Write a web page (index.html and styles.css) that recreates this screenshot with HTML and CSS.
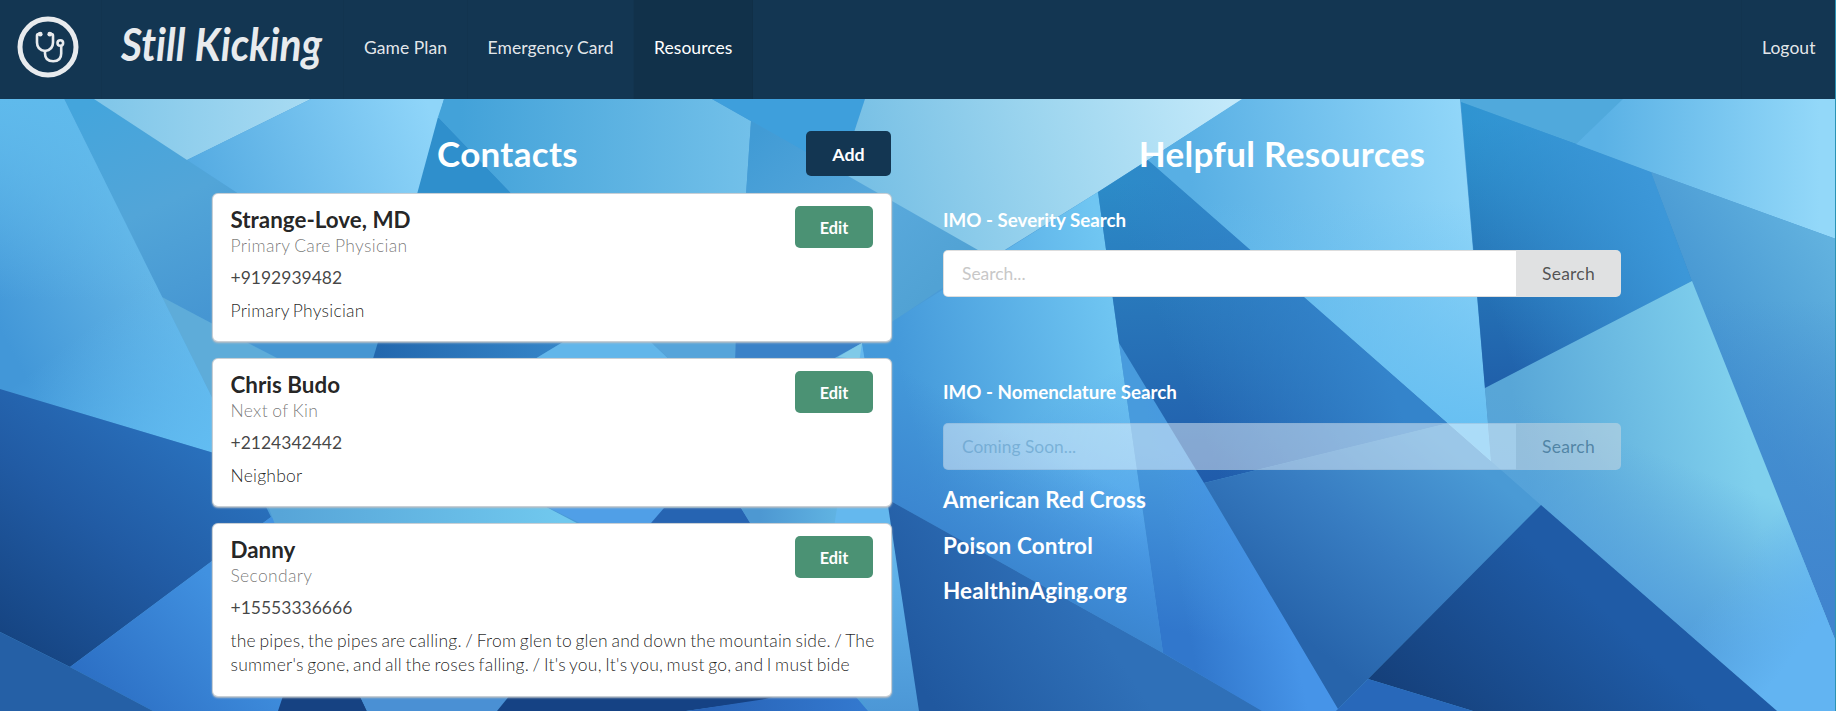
FILE: index.html
```html
<!DOCTYPE html>
<html lang="en">
<head>
<meta charset="utf-8">
<title>Still Kicking - Resources</title>
<link rel="stylesheet" href="styles.css">
</head>
<body>
<svg class="backdrop" width="1836" height="711" viewBox="0 0 1836 711" aria-hidden="true">
  <defs>
    <linearGradient id="ga" gradientUnits="userSpaceOnUse" x1="0" y1="330" x2="170" y2="240"><stop offset="0" stop-color="#4297d8"/><stop offset="1" stop-color="#6abbe9"/></linearGradient>
    <linearGradient id="ga2" gradientUnits="userSpaceOnUse" x1="0" y1="99" x2="0" y2="300"><stop offset="0" stop-color="#5fbaec"/><stop offset="1" stop-color="#5fbaec" stop-opacity="0"/></linearGradient>
    <linearGradient id="ga3" gradientUnits="userSpaceOnUse" x1="110" y1="310" x2="220" y2="450"><stop offset="0" stop-color="#5fbbf2" stop-opacity="0"/><stop offset="1" stop-color="#62bdf2"/></linearGradient>
    <linearGradient id="gb" gradientUnits="userSpaceOnUse" x1="100" y1="99" x2="200" y2="320"><stop offset="0" stop-color="#44a5dc"/><stop offset=".5" stop-color="#52a5d8"/><stop offset="1" stop-color="#4696d2"/></linearGradient>
    <linearGradient id="gc" gradientUnits="userSpaceOnUse" x1="110" y1="0" x2="300" y2="0"><stop offset="0" stop-color="#82c7e9"/><stop offset="1" stop-color="#a6daf2"/></linearGradient>
    <linearGradient id="gd" gradientUnits="userSpaceOnUse" x1="200" y1="190" x2="430" y2="110"><stop offset="0" stop-color="#55abe2"/><stop offset="1" stop-color="#8fd5f9"/></linearGradient>
    <linearGradient id="gf" gradientUnits="userSpaceOnUse" x1="210" y1="440" x2="40" y2="660"><stop offset="0" stop-color="#2a72be"/><stop offset=".5" stop-color="#215ba4"/><stop offset="1" stop-color="#164583"/></linearGradient>
    <linearGradient id="gg" gradientUnits="userSpaceOnUse" x1="90" y1="690" x2="212" y2="580"><stop offset="0" stop-color="#2c6fc4"/><stop offset="1" stop-color="#4191e0"/></linearGradient>
    <linearGradient id="gm1" gradientUnits="userSpaceOnUse" x1="378" y1="0" x2="560" y2="0"><stop offset="0" stop-color="#2368ae"/><stop offset="1" stop-color="#3585c8"/></linearGradient>
    <linearGradient id="gtop" gradientUnits="userSpaceOnUse" x1="460" y1="0" x2="750" y2="0"><stop offset="0" stop-color="#43a2d9"/><stop offset="1" stop-color="#72c0e9"/></linearGradient>
    <linearGradient id="gmid" gradientUnits="userSpaceOnUse" x1="280" y1="0" x2="560" y2="0"><stop offset="0" stop-color="#57a5d8"/><stop offset="1" stop-color="#70c8ee"/></linearGradient>
    <linearGradient id="gpale" gradientUnits="userSpaceOnUse" x1="870" y1="190" x2="1230" y2="99"><stop offset="0" stop-color="#78c0e5"/><stop offset=".5" stop-color="#9ed6ef"/><stop offset="1" stop-color="#c3e9fa"/></linearGradient>
    <linearGradient id="gw" gradientUnits="userSpaceOnUse" x1="760" y1="130" x2="920" y2="300"><stop offset="0" stop-color="#419bd5"/><stop offset=".6" stop-color="#59a9dc"/><stop offset="1" stop-color="#51a2d4"/></linearGradient>
    <linearGradient id="gi" gradientUnits="userSpaceOnUse" x1="760" y1="0" x2="885" y2="0"><stop offset="0" stop-color="#4d98d2"/><stop offset="1" stop-color="#6cc4ec"/></linearGradient>
    <linearGradient id="gi2" gradientUnits="userSpaceOnUse" x1="0" y1="540" x2="0" y2="711"><stop offset="0" stop-color="#64b8ee"/><stop offset="1" stop-color="#4c97d6"/></linearGradient>
    <linearGradient id="gl" gradientUnits="userSpaceOnUse" x1="900" y1="370" x2="1120" y2="320"><stop offset="0" stop-color="#4499da"/><stop offset="1" stop-color="#70c6f2"/></linearGradient>
    <linearGradient id="gl2" gradientUnits="userSpaceOnUse" x1="1000" y1="430" x2="1110" y2="640"><stop offset="0" stop-color="#4794e4" stop-opacity="0"/><stop offset="1" stop-color="#4899ee"/></linearGradient>
    <linearGradient id="gl3" gradientUnits="userSpaceOnUse" x1="960" y1="400" x2="900" y2="510"><stop offset="0" stop-color="#3b86d0" stop-opacity="0"/><stop offset="1" stop-color="#3b86d0"/></linearGradient>
    <linearGradient id="gj" gradientUnits="userSpaceOnUse" x1="930" y1="700" x2="1080" y2="600"><stop offset="0" stop-color="#20589f"/><stop offset="1" stop-color="#2f70b8"/></linearGradient>
    <linearGradient id="gk" gradientUnits="userSpaceOnUse" x1="1190" y1="180" x2="1200" y2="480"><stop offset="0" stop-color="#2c8bc8"/><stop offset=".45" stop-color="#2875b9"/><stop offset="1" stop-color="#205cab"/></linearGradient>
    <linearGradient id="gk2" gradientUnits="userSpaceOnUse" x1="1190" y1="400" x2="1370" y2="330"><stop offset="0" stop-color="#3484cb" stop-opacity="0"/><stop offset="1" stop-color="#3484cb"/></linearGradient>
    <linearGradient id="gll" gradientUnits="userSpaceOnUse" x1="1480" y1="470" x2="1330" y2="660"><stop offset="0" stop-color="#4a9ad5"/><stop offset=".5" stop-color="#387dc2"/><stop offset="1" stop-color="#2764ab"/></linearGradient>
    <linearGradient id="gmm" gradientUnits="userSpaceOnUse" x1="1210" y1="460" x2="1170" y2="630"><stop offset="0" stop-color="#489bdd"/><stop offset="1" stop-color="#3177cc"/></linearGradient>
    <linearGradient id="gmm2" gradientUnits="userSpaceOnUse" x1="1190" y1="640" x2="1290" y2="620"><stop offset="0" stop-color="#4694e8" stop-opacity="0"/><stop offset="1" stop-color="#4694e8"/></linearGradient>
    <linearGradient id="gn" gradientUnits="userSpaceOnUse" x1="1190" y1="180" x2="1470" y2="130"><stop offset="0" stop-color="#58afe4"/><stop offset="1" stop-color="#92d7f9"/></linearGradient>
    <linearGradient id="gn2" gradientUnits="userSpaceOnUse" x1="0" y1="200" x2="0" y2="440"><stop offset="0" stop-color="#66bff2" stop-opacity="0"/><stop offset="1" stop-color="#66bff2"/></linearGradient>
    <linearGradient id="go" gradientUnits="userSpaceOnUse" x1="1500" y1="120" x2="1490" y2="380"><stop offset="0" stop-color="#2b93cf"/><stop offset=".5" stop-color="#2779ba"/><stop offset="1" stop-color="#2061ab"/></linearGradient>
    <linearGradient id="go2" gradientUnits="userSpaceOnUse" x1="1480" y1="280" x2="1660" y2="210"><stop offset="0" stop-color="#3c97d8" stop-opacity="0"/><stop offset="1" stop-color="#3c97d8"/></linearGradient>
    <linearGradient id="gq" gradientUnits="userSpaceOnUse" x1="1600" y1="0" x2="1820" y2="0"><stop offset="0" stop-color="#5ab1e5"/><stop offset="1" stop-color="#93d8f9"/></linearGradient>
    <linearGradient id="gr" gradientUnits="userSpaceOnUse" x1="1700" y1="340" x2="1836" y2="250"><stop offset="0" stop-color="#4595d1"/><stop offset="1" stop-color="#62b2df"/></linearGradient>
    <linearGradient id="gr2" gradientUnits="userSpaceOnUse" x1="0" y1="300" x2="0" y2="620"><stop offset="0" stop-color="#4084ce" stop-opacity="0"/><stop offset="1" stop-color="#4084ce"/></linearGradient>
    <linearGradient id="gs" gradientUnits="userSpaceOnUse" x1="1520" y1="440" x2="1740" y2="400"><stop offset="0" stop-color="#58a6d7"/><stop offset="1" stop-color="#80d0ed"/></linearGradient>
    <linearGradient id="gs2" gradientUnits="userSpaceOnUse" x1="1750" y1="490" x2="1690" y2="640"><stop offset="0" stop-color="#539fdc" stop-opacity="0"/><stop offset="1" stop-color="#539fdc"/></linearGradient>
    <linearGradient id="gs3" gradientUnits="userSpaceOnUse" x1="1740" y1="560" x2="1820" y2="620"><stop offset="0" stop-color="#62b4f2" stop-opacity="0"/><stop offset="1" stop-color="#62b4f2"/></linearGradient>
    <linearGradient id="gt" gradientUnits="userSpaceOnUse" x1="1400" y1="700" x2="1540" y2="550"><stop offset="0" stop-color="#15407b"/><stop offset="1" stop-color="#1f5ba6"/></linearGradient>
    <linearGradient id="gbt" gradientUnits="userSpaceOnUse" x1="690" y1="0" x2="860" y2="0"><stop offset="0" stop-color="#2761b4"/><stop offset="1" stop-color="#3378ce"/></linearGradient>
  </defs>
  <rect width="1836" height="711" fill="#4a9bd6"/>
  <polygon points="64,99 95,99 260,208 380,342 374,370 300,370 162,297" fill="url(#gb)"/>
  <polygon points="162,297 212,323.5 246,342 275,357 330,390 244,462" fill="#5eacd9"/>
  <polygon points="94,99 311,99 187,160" fill="url(#gc)"/>
  <polygon points="187,160 311,99 444,99 396,275 300,275 260,208" fill="url(#gd)"/>
  <polygon points="0,99 64,99 244,462 0,389" fill="url(#ga)"/>
  <polygon points="0,99 64,99 244,462 0,389" fill="url(#ga2)"/>
  <polygon points="0,99 64,99 244,462 0,389" fill="url(#ga3)"/>
  <polygon points="0,389 244,462 271,517 212,561 70,667 0,632" fill="url(#gf)"/>
  <polygon points="70,667 271,517 400,600 278,711 153,711" fill="url(#gg)"/>
  <polygon points="0,632 70,667 153,711 0,711" fill="#2560a6"/>
  <polygon points="438,117 510,192 510,220 410,220" fill="#2f8fcc"/>
  <polygon points="444,99 712,99 751,121 736,342 734,400 650,342 510,192 438,117" fill="url(#gtop)"/>
  <polygon points="378,342 563,342 530,362 372,362" fill="url(#gm1)"/>
  <polygon points="563,342 651,342 672,362 530,362" fill="#62b6ea"/>
  <polygon points="651,342 736,342 735,362 672,362" fill="#56a4da"/>
  <polygon points="736,330 862,330 866,362 735,362" fill="#3b82c8"/>
  <polygon points="266,500 533,500 590,530 277,530" fill="url(#gmid)"/>
  <polygon points="533,500 672,500 646,530 594,530" fill="#509fe7"/>
  <polygon points="664,508 741,508 755,530 645,530" fill="#2664b2"/>
  <polygon points="712,99 865,99 841,172" fill="#3e9fdc"/>
  <polygon points="751,121 990,256 892,322 820,342 736,342" fill="url(#gw)"/>
  <polygon points="865,99 1243,99 1098,192 992,258 841,172" fill="url(#gpale)"/>
  <polygon points="862,343 750,405 741,508 750,523 890,530" fill="url(#gi)"/>
  <polygon points="838,357 862,343 865,360" fill="#80cae8"/>
  <polygon points="862,343 892,510 919,711 868,711 820,620" fill="url(#gi2)"/>
  <polygon points="1098,192 1119,343 1163,653 887,499 862,343 893,321" fill="url(#gl)"/>
  <polygon points="1098,192 1119,343 1163,653 887,499 862,343 893,321" fill="url(#gl2)"/>
  <polygon points="1098,192 1119,343 1163,653 887,499 862,343 893,321" fill="url(#gl3)"/>
  <polygon points="887,499 1163,653 1263,711 919,711" fill="url(#gj)"/>
  <polygon points="1119,343 1204,483 1339,709 1336,711 1262,711 1163,653" fill="url(#gmm)"/>
  <polygon points="1119,343 1204,483 1339,709 1336,711 1262,711 1163,653" fill="url(#gmm2)"/>
  <polygon points="1098,192 1148,160 1448,423 1204,483 1119,343" fill="url(#gk)"/>
  <polygon points="1098,192 1148,160 1448,423 1204,483 1119,343" fill="url(#gk2)"/>
  <polygon points="1448,423 1491,461 1541,505 1368,679 1338,709 1204,483" fill="url(#gll)"/>
  <polygon points="1242,99 1460,99 1491,461 1148,160" fill="url(#gn)"/>
  <polygon points="1242,99 1460,99 1491,461 1148,160" fill="url(#gn2)"/>
  <polygon points="1460,99 1624,99 1576,144 1461,103" fill="#50a9dc"/>
  <polygon points="1461,102 1576,144 1651,172 1692,281 1485,389" fill="url(#go)"/>
  <polygon points="1461,102 1576,144 1651,172 1692,281 1485,389" fill="url(#go2)"/>
  <polygon points="1623,99 1836,99 1836,239 1651,172 1576,144" fill="url(#gq)"/>
  <polygon points="1651,172 1836,239 1836,642 1692,281" fill="url(#gr)"/>
  <polygon points="1651,172 1836,239 1836,642 1692,281" fill="url(#gr2)"/>
  <polygon points="1485,388 1692,281 1836,642 1836,711 1777,711 1541,505 1491,461" fill="url(#gs)"/>
  <polygon points="1485,388 1692,281 1836,642 1836,711 1777,711 1541,505 1491,461" fill="url(#gs2)"/>
  <polygon points="1485,388 1692,281 1836,642 1836,711 1777,711 1541,505 1491,461" fill="url(#gs3)"/>
  <polygon points="1541,505 1777,711 1473,711 1368,679" fill="url(#gt)"/>
  <polygon points="1368,679 1473,711 1336,711" fill="#2868ba"/>
  <polygon points="285,690 357,690 367,711 278,711" fill="#164282"/>
  <polygon points="357,690 514,690 497,711 367,711" fill="#4a90d4"/>
  <polygon points="514,690 840,690 686,711 497,711" fill="#154284"/>
  <polygon points="686,711 765,699 800,690 850,690 868,711" fill="url(#gbt)"/>
  <rect x="1835" width="1" height="711" fill="#2b93b5"/>
</svg>

<nav class="menu">
  <a class="item badge-item" href="#">
    <svg width="62" height="62" viewBox="0 0 62 62" fill="none" stroke="#e8ebee" aria-hidden="true">
      <circle cx="31" cy="31" r="28" stroke-width="5"/>
      <g stroke-width="2.600" stroke-linecap="round" stroke-linejoin="round">
        <path d="M23 18h-1.500q-1.500 0-1.500 1.800v6.700q0 7.500 8 8.500 8-1 8-8.500v-6.700q0-1.800-1.500-1.800h-1.500"/>
        <path d="M28 35v2.500q0 7.800 8.200 7.800 8 0 8-7.800v-7.500"/>
        <circle cx="43.300" cy="27" r="2.800"/>
      </g>
      <g fill="#e8ebee" stroke="none"><circle cx="23.200" cy="18.200" r="2.400"/><circle cx="32.800" cy="18.200" r="2.400"/></g>
    </svg>
  </a>
  <a class="item wordmark" href="#"><svg width="218" height="76" viewBox="0 0 218 76"><text class="script" x="2" y="51" textLength="201" lengthAdjust="spacingAndGlyphs">Still Kicking</text></svg></a>
  <a class="item" href="#">Game Plan</a>
  <a class="item" href="#">Emergency Card</a>
  <a class="item active" href="#">Resources</a>
  <a class="item logout" href="#">Logout</a>
</nav>

<main class="columns">
  <section class="contacts">
    <header class="contacts-head"><h1>Contacts</h1><button class="button add">Add</button></header>
    <article class="card">
      <button class="button edit">Edit</button>
      <h2>Strange-Love, MD</h2><p class="meta">Primary Care Physician</p>
      <p class="phone">+9192939482</p><p class="note">Primary Physician</p>
    </article>
    <article class="card">
      <button class="button edit">Edit</button>
      <h2>Chris Budo</h2><p class="meta">Next of Kin</p>
      <p class="phone">+2124342442</p><p class="note">Neighbor</p>
    </article>
    <article class="card">
      <button class="button edit">Edit</button>
      <h2>Danny</h2><p class="meta">Secondary</p>
      <p class="phone">+15553336666</p><p class="note">the pipes, the pipes are calling. / From glen to glen and down the mountain side. / The<br>summer's gone, and all the roses falling. / It's you, It's you, must go, and I must bide</p>
    </article>
  </section>
  <section class="resources">
    <h1>Helpful Resources</h1>
    <h4>IMO - Severity Search</h4>
    <div class="search"><input type="text" placeholder="Search..."><button class="search-button">Search</button></div>
    <h4 class="second">IMO - Nomenclature Search</h4>
    <div class="search disabled"><input type="text" placeholder="Coming Soon..." disabled><button class="search-button" disabled>Search</button></div>
    <ul class="links"><li><a href="#">American Red Cross</a></li><li><a href="#">Poison Control</a></li><li><a href="#">HealthinAging.org</a></li></ul>
  </section>
</main>
</body>
</html>
```
FILE: styles.css
```css
* { box-sizing: border-box; }
body {
  margin: 0;
  height: 711px;
  overflow: hidden;
  font: 17.5px/25px Lato, "Liberation Sans", sans-serif;
  color: rgba(0, 0, 0, .87);
}
h1, h2, h4, p, ul { margin: 0; padding: 0; }
a { text-decoration: none; }
button, input { font-family: inherit; border: 0; }

.backdrop { position: absolute; top: 0; left: 0; z-index: -1; display: block; }

.menu { display: flex; height: 99px; margin-right: 1px; background: #133652; }
.item {
  display: flex;
  align-items: center;
  padding: 0 19.5px 5px 20px;
  border-right: 1px solid rgba(0, 0, 0, .03);
  color: rgba(255, 255, 255, .9);
  letter-spacing: .05px;
  white-space: nowrap;
}
.badge-item { width: 102px; padding: 0 0 5px 17px; }
.wordmark { width: 242px; padding: 0 0 4px 17px; }
.script {
  font: italic 700 45px Lato, cursive;
  fill: #e8ebee;
}
.active { background: #11314a; color: #fff; }
.logout { margin-left: auto; border-right: 0; border-left: 1px solid rgba(0, 0, 0, .03); }

.columns { display: flex; gap: 52px; padding-left: 213px; }
.contacts { width: 678px; }
.resources { width: 678px; }
h1 { font-size: 35px; line-height: 45px; font-weight: 700; letter-spacing: .3px; color: #fff; }

.contacts-head {
  display: grid;
  grid-template-columns: 1fr 85px;
  margin: 32px 0 18px;
  text-align: center;
}
.contacts-head h1 { padding-right: 4px; }
.button {
  padding: 0;
  border-radius: 5px;
  font-weight: 700;
  color: #fff;
  text-align: center;
}
.add { height: 45px; background: #133652; font-size: 17.8px; }
.edit { float: right; width: 78px; height: 42px; background: #4b9274; font-size: 16.25px; }

.card {
  height: 147px;
  margin-bottom: 18px;
  padding: 12px 18px 0 17.5px;
  background: #fff;
  border-radius: 5px;
  box-shadow: 0 0 0 1px #c8cfd5, 0 1px 2px 1px #b8bec4;
}
.card:last-child { height: 172px; }
.card h2 { font-size: 22.4px; line-height: 28px; font-weight: 700; }
.card p { line-height: 24px; }
.card .meta { font-weight: 300; letter-spacing: .33px; word-spacing: -.8px; color: rgba(0, 0, 0, .55); }
.card .phone { margin-top: 8px; color: rgba(0, 0, 0, .74); }
.card .note {
  margin-top: 9px;
  font-weight: 300;
  letter-spacing: .24px;
  word-spacing: -1.500px;
  white-space: nowrap;
  color: rgba(0, 0, 0, .87);
}

.resources h1 { margin: 32px 0 31px; text-align: center; }
h4 { margin-bottom: 18px; font-size: 18.75px; line-height: 25px; font-weight: 700; color: #fff; }
.second { margin: 82px 0 19px; }
.search { display: flex; height: 47px; }
.search input {
  flex: 1;
  min-width: 0;
  padding: 0 18px 1px;
  border: 1px solid rgba(34, 36, 38, .15);
  border-right: 0;
  border-radius: 5px 0 0 5px;
  background: #fff;
  font-size: 17.4px;
}
.search input::placeholder { color: #c8c8c8; opacity: 1; }
.search-button {
  width: 105px;
  padding: 0 0 1px;
  border-radius: 0 5px 5px 0;
  background: #e0e1e2;
  font-size: 17.5px;
  letter-spacing: .25px;
  color: rgba(0, 0, 0, .65);
}
.disabled input { background: rgba(255, 255, 255, .45); border-color: rgba(130, 170, 205, .35); }
.disabled input::placeholder { color: rgba(80, 145, 190, .5); }
.disabled .search-button { background: rgba(224, 225, 226, .45); color: rgba(50, 105, 140, .7); }
.links { margin-top: 14px; list-style: none; }
.links li { height: 45.700px; line-height: 32px; font-size: 22.5px; font-weight: 700; letter-spacing: .13px; }
.links a { color: #fff; }
```
